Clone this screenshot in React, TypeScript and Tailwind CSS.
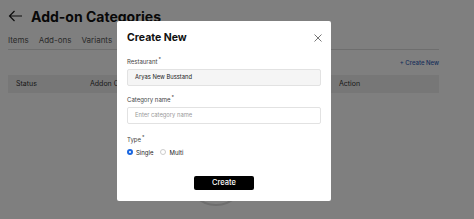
import React from "react";

function Star() {
  return <span className="relative top-[-2px] ml-[1px] text-[5px] leading-none">*</span>;
}

export default function App() {
  return (
    <div
      className="relative w-[474px] h-[219px] overflow-hidden bg-white"
      style={{ fontFamily: "Inter, 'Noto Sans', sans-serif" }}
    >
      {/* underlying page */}
      <div className="ml-2 w-[431px]">
        <div className="flex items-center h-[31px] pt-[1px]">
          <svg width="15" height="12" viewBox="0 0 15 12" className="mr-[8px]">
            <path d="M14 6H1.5M6.5 1L1.5 6l5 5" fill="none" stroke="#1a1a1a" strokeWidth="1.2" />
          </svg>
          <span className="text-[14px] font-bold text-[#111]">Add-on Categories</span>
        </div>
        <div className="flex gap-[10px] text-[8px] text-[#555] h-[18px] items-center">
          <span>Items</span>
          <span>Add-ons</span>
          <span>Variants</span>
        </div>
        <div className="h-px bg-[#ddd]" />
        <div className="flex justify-end h-[25px] items-center text-[6px] font-medium text-[#2f5db6]">
          + Create New
        </div>
        <div className="flex items-center h-[18px] bg-[#eee] text-[7px] text-[#333]">
          <span className="ml-2 w-[74px]">Status</span>
          <span className="w-[249px]">Addon Category</span>
          <span>Action</span>
        </div>
        <div className="ml-[178px] mt-[53px] w-[60px] h-[60px] rounded-full border-[2px] border-[#dcdcdc]" />
      </div>

      {/* overlay */}
      <div className="absolute inset-0 bg-black/50">
        <div className="ml-[117px] mt-[21px] w-[214px] h-[180px] bg-white rounded-[2px] px-[10px] pt-[10px] flex flex-col">
          <div className="flex items-center justify-between h-[14px]">
            <span className="text-[10.5px] font-bold text-[#111]">Create New</span>
            <svg width="8" height="8" viewBox="0 0 8 8" className="mr-[-1px]">
              <path d="M0.5 0.5l7 7M7.5 0.5l-7 7" stroke="#666" strokeWidth="0.9" />
            </svg>
          </div>
          <div className="mt-[12px] h-[8px] flex items-center text-[6px] text-[#444]">
            Restaurant<Star />
          </div>
          <div className="mt-[4px] h-[17px] rounded-[2px] border border-[#e2e2e2] bg-[#f5f5f5] flex items-center pl-[7px] text-[5.8px] text-[#222]">
            Aryas New Busstand
          </div>
          <div className="mt-[9px] h-[8px] flex items-center text-[6px] text-[#444]">
            Category name<Star />
          </div>
          <div className="mt-[4px] h-[17px] rounded-[2px] border border-[#e2e2e2] bg-white flex items-center pl-[7px] text-[5.8px] text-[#999]">
            Enter category name
          </div>
          <div className="mt-[11px] h-[8px] flex items-center text-[6px] text-[#444]">
            Type<Star />
          </div>
          <div className="mt-[5px] h-[8px] flex items-center text-[6px] text-[#222]">
            <span className="w-[6px] h-[6px] rounded-full border-[2px] border-[#1a66e0] bg-white" />
            <span className="ml-[3px]">Single</span>
            <span className="ml-[7px] w-[6px] h-[6px] rounded-full border border-[#ccc] bg-white" />
            <span className="ml-[3px]">Multi</span>
          </div>
          <div className="mt-[20px] flex justify-center">
            <div className="w-[60px] h-[14px] bg-black rounded-[2px] text-white text-[7.5px] font-medium flex items-center justify-center">
              Create
            </div>
          </div>
        </div>
      </div>
    </div>
  );
}
